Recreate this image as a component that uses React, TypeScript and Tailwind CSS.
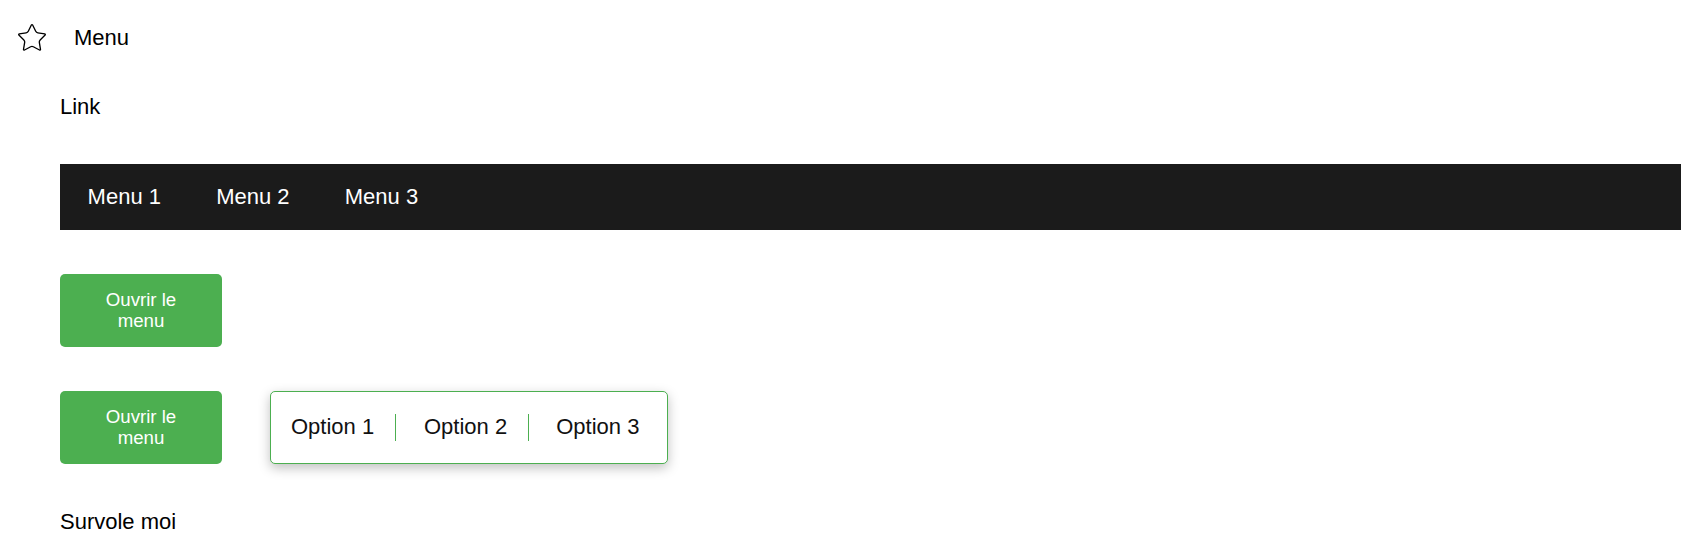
import React from 'react';
import { Star } from 'lucide-react';

const menuItems = ['Menu 1', 'Menu 2', 'Menu 3'];
const options = ['Option 1', 'Option 2', 'Option 3'];

const OpenButton = () => (
  <button className="w-[162px] py-[15px] rounded-[5px] bg-[#4caf50] text-white text-[18.67px] leading-[1.15] text-center">
    Ouvrir le
    <br />
    menu
  </button>
);

export default function App() {
  return (
    <div className="w-[1705px] h-[560px] bg-white text-black text-[22px] leading-[1.15] font-['Liberation_Sans',Arial,sans-serif] overflow-hidden">
      {/* Header */}
      <div className="flex items-center pt-[22px] pl-[16px] gap-[26px]">
        <Star size={32} strokeWidth={1} className="text-black" />
        <span>Menu</span>
      </div>

      <div className="pl-[60px] pr-[24px]">
        {/* Link */}
        <div className="mt-[40px]">Link</div>

        {/* Menu bar */}
        <nav className="mt-[45px] bg-[#1b1b1b] pt-[20px] pb-[20px] flex">
          {menuItems.map(item => (
            <span key={item} className="px-[27.6px] text-white">
              {item}
            </span>
          ))}
        </nav>

        {/* Button alone */}
        <div className="mt-[44px]">
          <OpenButton />
        </div>

        {/* Button with dropdown open */}
        <div className="mt-[44px] flex items-center gap-[47.5px]">
          <OpenButton />
          <div className="flex items-center border border-[#4caf50] rounded-[5px] bg-white shadow-[0_4px_12px_rgba(0,0,0,0.25)] py-[22px] pl-[20.5px] pr-[27.8px] text-[#111]">
            <span>{options[0]}</span>
            <span className="w-px h-[27px] bg-[#4caf50] ml-[21px] mr-[27.8px]" />
            <span>{options[1]}</span>
            <span className="w-px h-[27px] bg-[#4caf50] ml-[20.8px] mr-[27.3px]" />
            <span>{options[2]}</span>
          </div>
        </div>

        {/* Hover text */}
        <div className="mt-[45px]">Survole moi</div>
      </div>
    </div>
  );
}
